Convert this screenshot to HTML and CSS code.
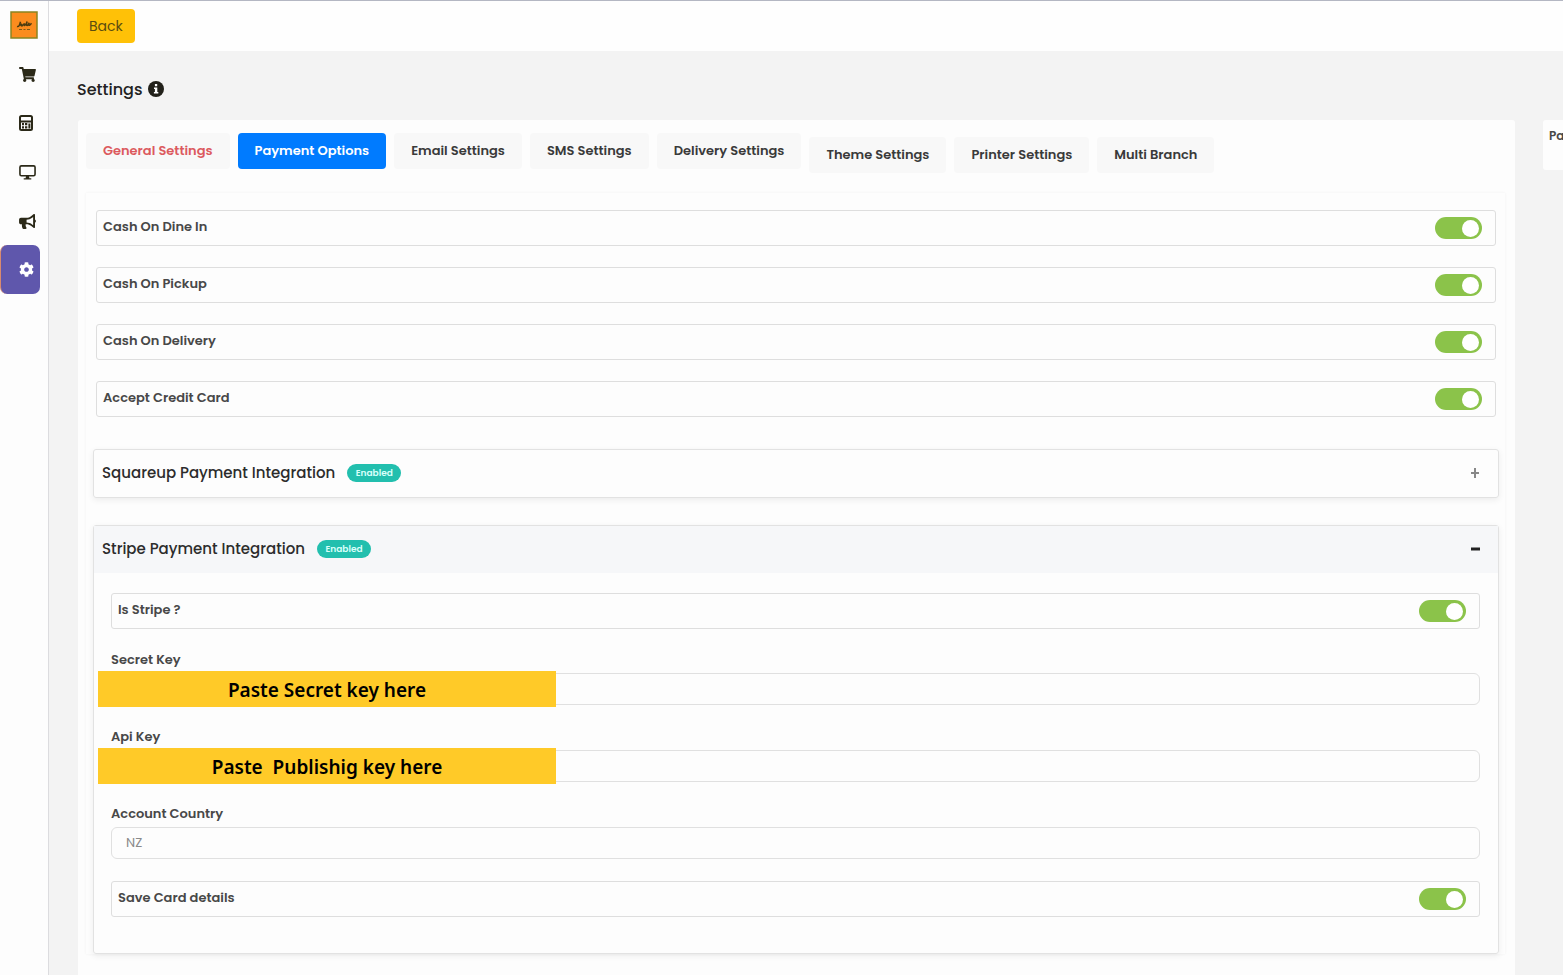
FILE: index.html
```
<!DOCTYPE html>
<html lang="en">
<head>
    <meta charset="UTF-8">
    <meta name="viewport" content="width=device-width, initial-scale=1.0">
    <title>Settings</title>
    <link rel="stylesheet" href="styles.css">
</head>
<body>

    <!-- Sidebar -->
    <aside class="sidebar">
        <a href="#" class="logo" aria-label="Home">
            <svg viewBox="0 0 28 28" width="28" height="28">
                <rect x="1" y="1" width="26" height="26" fill="#fb8c1e" stroke="#8a8420" stroke-width="1.5"/>
                <path d="M7 15.500c2 .6 2.600-1.500 3.500-4.800M9.800 14.500c1-2 2.300-1.500 1.600.2.700.5 1.500-.2 2-1.200.6-1 1.800-.6 1.200.9.900.2 2-2.400 2.600-3.900-.6 2-1.200 3.900-.1 3.900.9 0 1.500-1.400 2.100-2.600-.4 1.500-.5 2.600.3 2.500.8-.2 1.300-1.300 2-2" fill="none" stroke="#4c3c10" stroke-width="1.500"/>
                <path d="M9 18.500h3M13.500 18.500h2M17 18.500h3" stroke="#7c5a18" stroke-width="1.200"/>
            </svg>
        </a>
        <nav class="menu">
            <a href="#" aria-label="Orders">
                <svg viewBox="0 0 576 512" width="17" height="15"><path d="M528.120 301.319l47.273-208C578.806 78.301 567.391 64 551.990 64H159.208l-9.166-44.810C147.758 8.021 137.930 0 126.529 0H24C10.745 0 0 10.745 0 24v16c0 13.255 10.745 24 24 24h69.883l70.248 343.435C147.325 417.100 136 435.222 136 456c0 30.928 25.072 56 56 56s56-25.072 56-56c0-15.674-6.447-29.835-16.824-40h209.647C430.447 426.165 424 440.326 424 456c0 30.928 25.072 56 56 56s56-25.072 56-56c0-22.172-12.888-41.332-31.579-50.405l5.517-24.276c3.413-15.018-8.002-29.319-23.403-29.319H218.117l-6.545-32h293.145c11.206 0 20.920-7.754 23.403-18.681z"/></svg>
            </a>
            <a href="#" aria-label="Point of sale" class="narrow">
                <svg viewBox="0 0 14 16" width="14" height="16"><rect x="1" y="1" width="12" height="14" rx="1.500" fill="none" stroke="#2b2918" stroke-width="2"/><path d="M1 6.500h12" stroke="#2b2918" stroke-width="2"/><path d="M3 8h2v2.300H3zM6 8h2.300v2.300H6zM9.400 8.500h2v5h-2zM3 11.200h2v2.300H3zM6 11.200h2.300v2.300H6z"/></svg>
            </a>
            <a href="#" aria-label="Display">
                <svg viewBox="0 0 18 16" width="17" height="16"><rect x="1" y="1.500" width="16" height="10.500" rx="1.500" fill="none" stroke="#2b2918" stroke-width="1.700"/><path d="M7.500 12h3l.5 2.500h2V16H5v-1.500h2z"/></svg>
            </a>
            <a href="#" aria-label="Marketing">
                <svg viewBox="0 0 576 512" width="17" height="15"><path d="M576 240c0-23.630-12.950-44.040-32-55.120V32.010C544 23.260 537.020 0 512 0c-7.120 0-14.190 2.380-19.980 7.020l-85.030 68.030C364.280 109.190 310.660 128 256 128H64c-35.350 0-64 28.650-64 64v96c0 35.350 28.650 64 64 64h33.700c-1.390 10.480-2.180 21.140-2.180 32 0 39.770 9.260 77.350 25.560 110.940 5.190 10.690 16.520 17.060 28.400 17.060h74.280c26.050 0 41.690-29.840 25.900-50.560-16.400-21.520-26.150-48.360-26.150-77.440 0-11.110 1.620-21.790 4.410-32H256c54.660 0 108.280 18.810 150.980 52.950l85.030 68.030a32.023 32.023 0 0 0 19.980 7.020c24.920 0 32-22.780 32-32V295.130C563.050 284.040 576 263.630 576 240zm-96 141.420l-33.050-26.440C392.950 311.780 325.120 288 256 288v-96c69.120 0 136.950-23.780 190.950-66.980L480 98.580v282.840z"/></svg>
            </a>
            <a href="#" aria-label="Settings" class="narrow active">
                <svg viewBox="0 0 512 512" width="15" height="15"><path d="M487.400 315.700l-42.600-24.600c4.300-23.200 4.300-47 0-70.200l42.600-24.600c4.900-2.800 7.100-8.600 5.500-14-11.100-35.600-30-67.800-54.700-94.600-3.800-4.100-10-5.100-14.800-2.300L380.800 110c-17.900-15.400-38.500-27.300-60.800-35.100V25.800c0-5.600-3.900-10.500-9.400-11.700-36.700-8.200-74.300-7.800-109.200 0-5.500 1.200-9.400 6.100-9.400 11.700V75c-22.200 7.900-42.800 19.800-60.800 35.100L88.700 85.500c-4.900-2.800-11-1.900-14.800 2.300-24.700 26.700-43.600 58.900-54.700 94.600-1.700 5.400.6 11.200 5.500 14L67.300 221c-4.300 23.200-4.300 47 0 70.200l-42.600 24.600c-4.900 2.800-7.100 8.600-5.500 14 11.100 35.600 30 67.800 54.700 94.600 3.800 4.100 10 5.100 14.800 2.300l42.600-24.600c17.900 15.400 38.500 27.300 60.800 35.100v49.200c0 5.600 3.900 10.500 9.400 11.700 36.700 8.200 74.300 7.800 109.200 0 5.500-1.200 9.400-6.100 9.400-11.700v-49.200c22.200-7.900 42.800-19.800 60.800-35.100l42.600 24.600c4.900 2.800 11 1.900 14.800-2.300 24.700-26.700 43.600-58.900 54.700-94.600 1.500-5.500-.7-11.300-5.600-14.100zM256 336c-44.100 0-80-35.900-80-80s35.900-80 80-80 80 35.900 80 80-35.900 80-80 80z"/></svg>
            </a>
        </nav>
    </aside>

    <div class="page">
        <header class="topbar">
            <button type="button" class="back-btn">Back</button>
        </header>

        <h1 class="title">
            Settings
            <svg viewBox="0 0 16 16" width="16" height="16"><circle cx="8" cy="8" r="8" fill="#22211a"/><path d="M6.900 3h2.300v2.200H6.900zM6 6.500h3.300v4.400h1V12.500H5.900v-1.600h1V8.100H6z" fill="#fff"/></svg>
        </h1>

        <div class="columns">
            <main class="card">
                <div class="tabs">
                    <button type="button" class="tab danger">General Settings</button>
                    <button type="button" class="tab selected">Payment Options</button>
                    <button type="button" class="tab">Email Settings</button>
                    <button type="button" class="tab">SMS Settings</button>
                    <button type="button" class="tab">Delivery Settings</button>
                    <button type="button" class="tab low">Theme Settings</button>
                    <button type="button" class="tab low">Printer Settings</button>
                    <button type="button" class="tab low">Multi Branch</button>
                </div>

                <div class="panel">
                    <div class="switches">
                        <label class="switch-row">Cash On Dine In <input type="checkbox" class="switch" checked></label>
                        <label class="switch-row">Cash On Pickup <input type="checkbox" class="switch" checked></label>
                        <label class="switch-row">Cash On Delivery <input type="checkbox" class="switch" checked></label>
                        <label class="switch-row">Accept Credit Card <input type="checkbox" class="switch" checked></label>
                    </div>

                    <section class="accordion">
                        <h2 class="accordion-head">
                            Squareup Payment Integration
                            <span class="badge">Enabled</span>
                            <button type="button" class="expand" aria-label="Expand">
                                <svg viewBox="0 0 10 10" width="10" height="10"><path d="M5 0v10M1 5h8" stroke="#888" stroke-width="2"/></svg>
                            </button>
                        </h2>
                    </section>

                    <section class="accordion">
                        <h2 class="accordion-head open">
                            Stripe Payment Integration
                            <span class="badge">Enabled</span>
                            <button type="button" class="expand" aria-label="Collapse">
                                <svg viewBox="0 0 10 10" width="10" height="10"><path d="M1 5h9" stroke="#222" stroke-width="3"/></svg>
                            </button>
                        </h2>
                        <div class="accordion-body">
                            <label class="switch-row">Is Stripe ? <input type="checkbox" class="switch" checked></label>

                            <div class="field">
                                <label for="secret-key">Secret Key</label>
                                <div class="control">
                                    <input type="text" id="secret-key">
                                    <div class="note">Paste Secret key here</div>
                                </div>
                            </div>
                            <div class="field">
                                <label for="api-key">Api Key</label>
                                <div class="control">
                                    <input type="text" id="api-key">
                                    <div class="note">Paste&nbsp; Publishig key here</div>
                                </div>
                            </div>
                            <div class="field">
                                <label for="country">Account Country</label>
                                <div class="control">
                                    <input type="text" id="country" value="NZ">
                                </div>
                            </div>

                            <label class="switch-row">Save Card details <input type="checkbox" class="switch" checked></label>
                        </div>
                    </section>
                </div>
            </main>

            <aside class="side-card">Pa</aside>
        </div>
    </div>

</body>
</html>
```
FILE: styles.css
```
* {
    box-sizing: border-box;
}
body {
    margin: 0;
    height: 100vh;
    overflow: hidden;
    display: flex;
    background: #f3f3f3;
    border-top: 1px solid #b4b7c3;
    font-family: Poppins, Inter, sans-serif;
    font-size: 13px;
    font-weight: 600;
    color: #484848;
}
button,
input {
    font: inherit;
    color: inherit;
}

/* Sidebar */
.sidebar {
    flex: 0 0 49px;
    background: #fdfdfd;
    border-right: 1px solid #dcdcdf;
}
.logo {
    display: flex;
    height: 48px;
    padding: 10px 0 0 10px;
}
.menu a {
    display: flex;
    align-items: center;
    justify-content: center;
    height: 49px;
    padding: 1px 0 0 6px;
    fill: #2b2918;
}
.menu .narrow {
    padding-left: 3px;
}
.menu .active {
    width: 40px;
    padding: 0 0 0 12px;
    background: #5f57ac;
    border-left: 1px solid #d98a6e;
    border-radius: 7px;
    fill: #fff;
}

/* Page */
.page {
    flex: 1;
    min-width: 0;
    display: flex;
    flex-direction: column;
}
.topbar {
    flex: none;
    height: 50px;
    padding: 8px 28px;
    background: #fefefe;
}
.back-btn {
    height: 34px;
    padding: 0 12px;
    border: none;
    border-radius: 4px;
    background: #ffc107;
    color: #5c4d10;
    font-size: 14px;
    font-weight: 400;
    cursor: pointer;
}
.title {
    display: flex;
    align-items: center;
    gap: 6px;
    height: 24px;
    margin: 26px 28px 19px;
    font-size: 16px;
    font-weight: 500;
    color: #222;
}
.columns {
    flex: 1;
    min-height: 0;
    display: flex;
    align-items: flex-start;
    gap: 28px;
    padding-left: 29px;
}
.card {
    flex: 1;
    min-width: 0;
    min-height: 100%;
    background: #fdfdfd;
    border-radius: 3px 3px 0 0;
}
.side-card {
    flex: 0 0 20px;
    height: 50px;
    padding: 7px 0 0 6px;
    overflow: hidden;
    white-space: nowrap;
    background: #fdfdfd;
    border-radius: 3px 0 0 3px;
    font-size: 12px;
}

/* Tabs */
.tabs {
    display: flex;
    gap: 8px;
    padding: 13px 8px 24px;
}
.tab {
    height: 36px;
    padding: 0 17px;
    border: none;
    border-radius: 4px;
    background: #f8f8f8;
    color: #3a3a3a;
    white-space: nowrap;
    cursor: pointer;
}
.tab.danger {
    color: #dc5a5e;
}
.tab.selected {
    background: #007bff;
    color: #fff;
}
.tab.low {
    margin-top: 4px;
    margin-bottom: -4px;
}

/* Payment options */
.panel {
    margin: 0 10px 0 8px;
    padding: 17px 6px 0 7px;
    box-shadow: 0 0 3px rgba(0, 0, 0, 0.05);
}
.switches {
    display: flex;
    flex-direction: column;
    gap: 21px;
    padding: 0 3px;
    margin-bottom: 32px;
}
.switch-row {
    display: flex;
    align-items: center;
    justify-content: space-between;
    height: 36px;
    padding: 0 13px 3px 6px;
    border: 1px solid #dedede;
    border-radius: 3px;
}
.switch {
    appearance: none;
    display: flex;
    align-items: center;
    width: 47px;
    height: 22px;
    margin: 3px 0 0;
    padding: 0 3px;
    border-radius: 11px;
    background: #bbb;
    cursor: pointer;
}
.switch::before {
    content: "";
    width: 17px;
    height: 17px;
    border-radius: 50%;
    background: #fff;
}
.switch:checked {
    justify-content: flex-end;
    background: #8bc34a;
}

/* Accordions */
.accordion {
    margin-bottom: 27px;
    border: 1px solid #e2e2e2;
    border-radius: 3px;
    box-shadow: 0 2px 6px rgba(0, 0, 0, 0.07);
}
.accordion-head {
    display: flex;
    align-items: center;
    gap: 12px;
    height: 47px;
    margin: 0;
    padding: 0 18px 2px 8px;
    font-size: 15px;
    font-weight: 500;
    color: #2c2c2c;
}
.accordion-head.open {
    background: #f6f7f9;
}
.badge {
    width: 54px;
    height: 18px;
    border-radius: 9px;
    background: #22bfae;
    color: #d8fffa;
    font-size: 9px;
    font-weight: 600;
    line-height: 18px;
    text-align: center;
}
.expand {
    display: flex;
    margin-left: auto;
    padding: 0;
    border: none;
    background: none;
    cursor: pointer;
}
.accordion-body {
    padding: 20px 18px 36px 17px;
}
.field {
    margin-top: 22px;
}
.field + .field {
    margin-top: 23px;
}
.field label {
    display: block;
    height: 22px;
    line-height: 18px;
}
.field + .switch-row {
    margin-top: 22px;
}
.control {
    position: relative;
}
.control input {
    display: block;
    width: 100%;
    height: 32px;
    padding: 0 14px;
    border: 1px solid #e0e0e0;
    border-radius: 6px;
    background: transparent;
    color: #8a8a8a;
    font-weight: 400;
}

/* Hint laid over the key inputs */
.note {
    position: absolute;
    top: -2px;
    left: -13px;
    width: 458px;
    height: 36px;
    background: #ffca28;
    color: #000;
    font-family: "Noto Sans", sans-serif;
    font-size: 19px;
    font-weight: 600;
    line-height: 38px;
    text-align: center;
}
```
